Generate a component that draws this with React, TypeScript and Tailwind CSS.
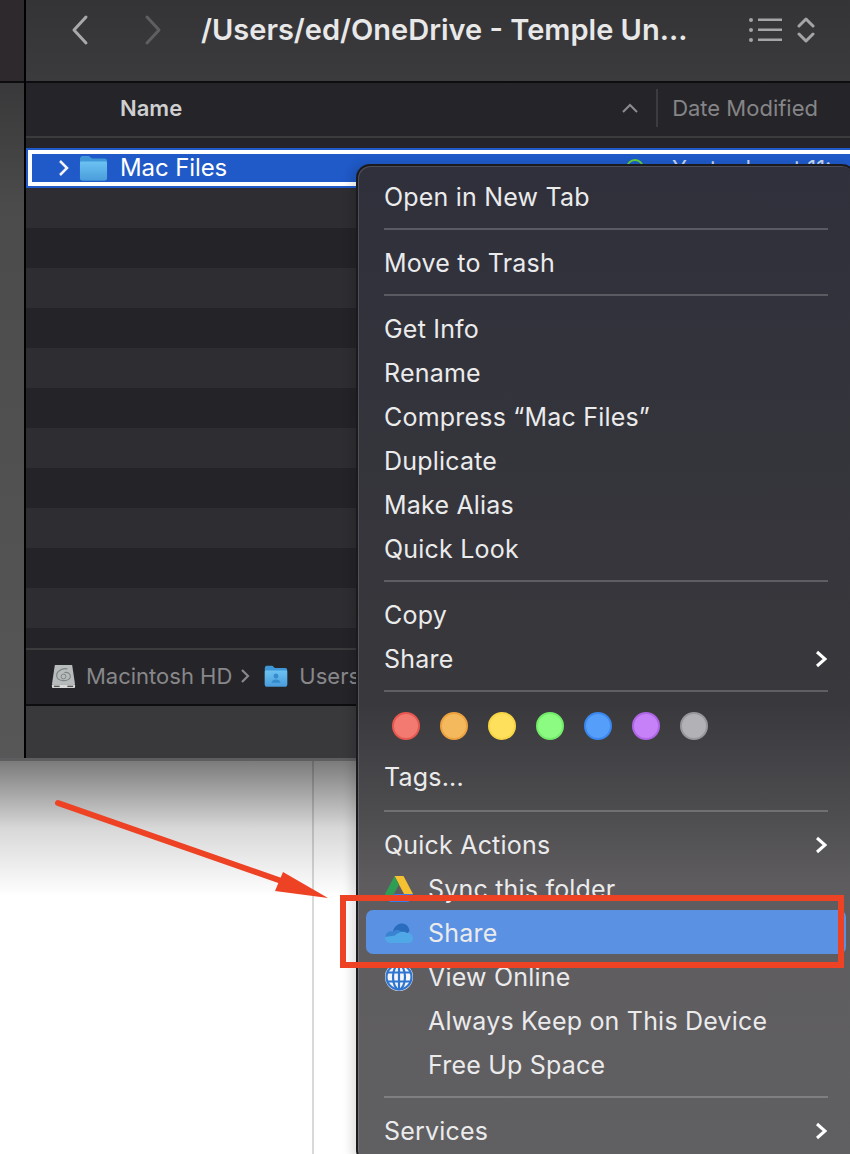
const ff = "font-['Inter','Liberation_Sans',sans-serif]";

function FolderIcon({ user }: { user?: boolean }) {
  const w = user ? 24 : 29;
  const h = user ? 22 : 26;
  const id = user ? "fold-u" : "fold-a";
  return (
    <svg width={w} height={h} viewBox="0 0 30 26" preserveAspectRatio="none" className="shrink-0">
      <defs>
        <linearGradient id={id} x1="0" y1="0" x2="0" y2="1">
          <stop offset="0" stopColor="#6cc2f2" />
          <stop offset="1" stopColor="#4a9ddb" />
        </linearGradient>
      </defs>
      <path d="M1 4C1 2.500 2 1 3.500 1H10C11.500 1 12 3.500 14 3.500H26.500C28 3.500 29 4.500 29 6V23C29 24.500 28 25.500 26.500 25.500H3.500C2 25.500 1 24.500 1 23Z" fill="#3f97d8" />
      <path d="M1 8C1 7 1.600 6.500 2.500 6.500H27.500C28.400 6.500 29 7 29 8V23C29 24.500 28 25.500 26.500 25.500H3.500C2 25.500 1 24.500 1 23Z" fill={`url(#${id})`} />
      {user && (
        <g fill="#2f86c8" opacity="0.85">
          <circle cx="15" cy="13" r="3" />
          <path d="M9.500 21C10 17.800 12 17 15 17S20 17.800 20.500 21Z" />
        </g>
      )}
    </svg>
  );
}

function DiskIcon() {
  return (
    <svg width="25" height="25" viewBox="0 0 26 26" className="shrink-0">
      <path d="M4 1H22L25 21H1Z" fill="#b7bbbc" />
      <rect x="1" y="21" width="24" height="4" rx="1" fill="#d8dada" />
      <rect x="3" y="22.500" width="6" height="1.500" fill="#555" />
      <rect x="17" y="22.500" width="6" height="1.500" fill="#555" />
      <path d="M17 5C11 4 5 8 6 13C7 18 17 19 20 14C21 11 18 8 14 9" fill="none" stroke="#7e8283" strokeWidth="1.200" />
      <circle cx="13" cy="13" r="2.500" fill="none" stroke="#7e8283" strokeWidth="1" />
    </svg>
  );
}

function DriveIcon() {
  return (
    <svg width="28" height="26" viewBox="0 0 28 24" preserveAspectRatio="none" className="shrink-0">
      <path d="M9.500 0H18.500L28 16.500H19Z" fill="#f4c133" />
      <path d="M9.500 0L0 16.500L4.500 24L14 7.800Z" fill="#2f9e54" />
      <path d="M4.500 24H23.500L28 16.500H9Z" fill="#3b7de8" />
    </svg>
  );
}

function OneDriveIcon() {
  return (
    <svg width="28" height="20" viewBox="0 0 28 20" className="shrink-0">
      <path d="M8 8C9.500 3 13 0.500 17 0.500C21 0.500 24 3.500 24.500 8L20 13H9Z" fill="#2a6cbd" />
      <path d="M0.500 14C0.500 10 4 7.500 8 8.500C10 6.500 14 6 17 9L22 13L8 15Z" fill="#3a82d2" />
      <path d="M0 14L10 12.500C14 8.500 19 8 22 10C25 9.500 28 12 28 15C28 18 26 20 24 20H5C2 20 0 17 0 14Z" fill="#50a8e6" />
    </svg>
  );
}

function GlobeIcon() {
  return (
    <svg width="28" height="28" viewBox="0 0 28 28" className="shrink-0">
      <circle cx="14" cy="14" r="14" fill="#f4f5f7" />
      <g fill="none" stroke="#2f74cf" strokeWidth="2.200">
        <circle cx="14" cy="14" r="12.500" />
        <ellipse cx="14" cy="14" rx="6" ry="12.500" />
        <path d="M14 1.500V26.500M2 9.500H26M2 18.500H26" />
      </g>
    </svg>
  );
}

function Item({ label, icon, indent, arrow, active }: { label: string; icon?: React.ReactNode; indent?: boolean; arrow?: boolean; active?: boolean }) {
  return (
    <div className={`flex h-11 items-center rounded-[7px] pl-[18px] pr-[19px] pt-[2px] ${active ? "bg-[#5a91e3]" : ""}`}>
      {icon && <span className="flex w-11 shrink-0 items-center pl-px">{icon}</span>}
      {indent && !icon && <span className="w-11 shrink-0" />}
      <span className="text-[25px] leading-none tracking-[0.2px] text-[#ebebec]">{label}</span>
      {arrow && (
        <svg width="12" height="18" viewBox="0 0 12 18" className="ml-auto shrink-0">
          <path d="M2 2L10 9L2 16" fill="none" stroke="#fff" strokeWidth="3" />
        </svg>
      )}
    </div>
  );
}

function Sep() {
  return <div className="mx-[18px] my-[10px] h-0.5 bg-white/20" />;
}

const tagColors = [
  "bg-[#f27a70] border-[#e5584f]",
  "bg-[#f4b95c] border-[#eda13f]",
  "bg-[#ffe05c] border-[#f7d545]",
  "bg-[#8cfb82] border-[#72ec69]",
  "bg-[#559ffb] border-[#3a87ee]",
  "bg-[#c781f8] border-[#ae65e6]",
  "bg-[#b2b1b5] border-[#98979b]",
];

function ContextMenu() {
  return (
    <div className="absolute left-[356px] top-[164px] h-[1000px] w-[500px] rounded-[14px] border-2 border-[#1b1b1f] bg-[linear-gradient(to_bottom,#2f303b_0%,#39383c_54%,#4d4c4f_65%,#5e5c5f_72%,#605f62_100%)] pl-2 pr-2 pt-2 shadow-[-5px_0_10px_rgba(0,0,0,0.12),inset_1px_1px_0_rgba(255,255,255,0.14)]">
      <Item label="Open in New Tab" />
      <Sep />
      <Item label="Move to Trash" />
      <Sep />
      <Item label="Get Info" />
      <Item label="Rename" />
      <Item label="Compress “Mac Files”" />
      <Item label="Duplicate" />
      <Item label="Make Alias" />
      <Item label="Quick Look" />
      <Sep />
      <Item label="Copy" />
      <Item label="Share" arrow />
      <Sep />
      <div className="flex h-12 items-center gap-5 pl-[26px]">
        {tagColors.map((c) => (
          <span key={c} className={`h-7 w-7 rounded-full border-2 ${c}`} />
        ))}
      </div>
      <div className="flex h-[54px] items-center pl-[18px]">
        <span className="text-[25px] leading-none tracking-[0.2px] text-[#ebebec]">Tags...</span>
      </div>
      <div className="mx-[18px] mb-[10px] mt-[6px] h-0.5 bg-white/20" />
      <Item label="Quick Actions" arrow />
      <Item label="Sync this folder" icon={<DriveIcon />} />
      <Item label="Share" icon={<OneDriveIcon />} active />
      <Item label="View Online" icon={<GlobeIcon />} />
      <Item label="Always Keep on This Device" indent />
      <Item label="Free Up Space" indent />
      <Sep />
      <Item label="Services" arrow />
    </div>
  );
}

function Arrow() {
  return (
    <svg className="absolute left-0 top-0" width="850" height="1154" viewBox="0 0 850 1154">
      <path d="M58 803L290 884" stroke="#ee4224" strokeWidth="6" strokeLinecap="round" fill="none" />
      <path d="M283 872L275 891L328 898Z" fill="#ee4224" />
    </svg>
  );
}

export default function App() {
  const stripes = [0, 1, 2, 3, 4, 5, 6, 7, 8, 9, 10, 11];
  return (
    <div className={`relative h-[1154px] w-[850px] overflow-hidden bg-white ${ff}`}>
      <div className="flex h-[761px] border-b-[3px] border-b-[#5e5e60]">
        <div className="flex w-[26px] shrink-0 flex-col border-r-2 border-black">
          <div className="h-[83px] shrink-0 border-b-2 border-[#0d0d0f] bg-[#2d292c]" />
          <div className="flex-1 bg-[linear-gradient(to_bottom,#39383a_0%,#4b4b4b_18%,#575757_100%)]" />
        </div>
        <div className="flex min-w-0 flex-1 flex-col">
          <div className="flex h-[83px] shrink-0 items-center border-b-2 border-[#0d0d0f] bg-gradient-to-b from-[#343436] to-[#3b3b3d] pb-[22px]">
            <svg width="20" height="32" viewBox="0 0 20 32" className="ml-[44px] shrink-0">
              <path d="M16 3L4 16L16 29" fill="none" stroke="#a9a9ab" strokeWidth="3" strokeLinecap="round" strokeLinejoin="round" />
            </svg>
            <svg width="20" height="32" viewBox="0 0 20 32" className="ml-[53px] shrink-0">
              <path d="M4 3L16 16L4 29" fill="none" stroke="#5f5f61" strokeWidth="3" strokeLinecap="round" strokeLinejoin="round" />
            </svg>
            <span className="ml-[38px] whitespace-nowrap text-[29px] font-semibold leading-none text-[#e8e8e9]">/Users/ed/OneDrive - Temple Un...</span>
            <svg width="36" height="26" viewBox="0 0 36 26" className="ml-auto shrink-0">
              <g fill="#a5a5a7">
                <circle cx="3" cy="3" r="2" />
                <circle cx="3" cy="13" r="2" />
                <circle cx="3" cy="23" r="2" />
                <rect x="10" y="1.500" width="24" height="2.500" />
                <rect x="10" y="11.500" width="24" height="2.500" />
                <rect x="10" y="21.500" width="24" height="2.500" />
              </g>
            </svg>
            <svg width="18" height="28" viewBox="0 0 18 28" className="ml-[13px] mr-[35px] shrink-0">
              <path d="M2 10L9 3L16 10M2 18L9 25L16 18" fill="none" stroke="#a5a5a7" strokeWidth="3" strokeLinecap="round" strokeLinejoin="round" />
            </svg>
          </div>
          <div className="flex h-[55px] shrink-0 items-center border-b-2 border-[#3b3b3e] bg-[#252429] pb-[3px]">
            <span className="ml-[94px] text-[22px] font-semibold leading-none text-[#cfcfd0]">Name</span>
            <svg width="16" height="10" viewBox="0 0 16 10" className="ml-auto shrink-0">
              <path d="M1 9L8 2L15 9" fill="none" stroke="#8d8d8f" strokeWidth="2" />
            </svg>
            <div className="ml-[18px] h-[38px] w-0.5 bg-[#3c3c3f]" />
            <span className="ml-[14px] mr-[32px] whitespace-nowrap text-[22px] leading-none text-[#858587]">Date Modified</span>
          </div>
          <div className="h-[510px] shrink-0 overflow-hidden bg-[#252429]">
            <div className="-mr-[10px] mt-[10px] h-10 border-2 border-[#1f5ac8] bg-white">
              <div className="mx-1 my-1 flex h-7 items-center whitespace-nowrap bg-[#1f5ac8]">
                <svg width="12" height="18" viewBox="0 0 12 18" className="ml-[26px] shrink-0">
                  <path d="M2 2L9 9L2 16" fill="none" stroke="#f3f3f5" strokeWidth="2.500" />
                </svg>
                <span className="ml-[9px] flex"><FolderIcon /></span>
                <span className="ml-[12px] flex-1 text-[24px] leading-none tracking-[-0.1px] text-white">Mac Files</span>
                <div className="flex w-[228px] shrink-0 items-center overflow-hidden">
                  <span className="h-[18px] w-[18px] shrink-0 rounded-full border-2 border-[#5fd03a]" />
                  <span className="ml-[28px] text-[22px] leading-none text-[#c9d6ee]">Yesterday at 11:</span>
                </div>
              </div>
            </div>
            {stripes.map((i) => (
              <div key={i} className={`h-10 ${i % 2 === 0 ? "bg-[#2e2d31]" : "bg-[#242328]"}`} />
            ))}
          </div>
          <div className="flex h-[58px] shrink-0 items-center border-y-2 border-t-[#3b3b3e] border-b-[#0d0d0f] bg-[#252429] pb-[2px]">
            <span className="ml-[25px] flex"><DiskIcon /></span>
            <span className="ml-[10px] whitespace-nowrap text-[22px] leading-none text-[#88888a]">Macintosh HD</span>
            <svg width="10" height="16" viewBox="0 0 10 16" className="ml-[8px] shrink-0">
              <path d="M2 2L8 8L2 14" fill="none" stroke="#88888a" strokeWidth="2.200" />
            </svg>
            <span className="ml-[14px] flex"><FolderIcon user /></span>
            <span className="ml-[11px] whitespace-nowrap text-[22px] leading-none text-[#88888a]">Users</span>
          </div>
          <div className="flex-1 bg-[#39393b]" />
        </div>
      </div>
      <div className="h-[135px] w-full bg-gradient-to-b from-[#7b7b7b] via-[#d8d8d8] to-white" />
      <div className="absolute left-[312px] top-[761px] h-[393px] w-0.5 bg-black/15" />
      <ContextMenu />
      <Arrow />
      <div className="absolute left-[340px] top-[895px] h-[73px] w-[504px] border-[6px] border-[#ee4224]" />
    </div>
  );
}
